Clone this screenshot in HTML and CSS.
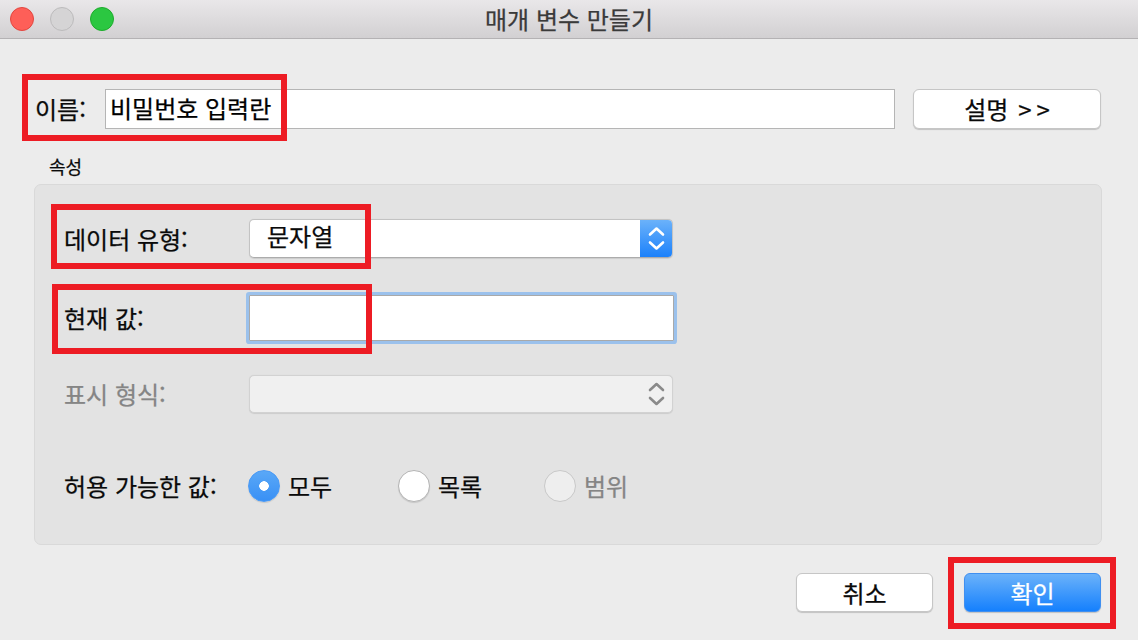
FILE: index.html
```html
<!DOCTYPE html>
<html lang="ko">
<head>
<meta charset="utf-8">
<title>매개 변수 만들기</title>
<link rel="stylesheet" href="styles.css">
</head>
<body>
<div class="screen">
  <header class="titlebar">
    <div class="lights">
      <span class="light light-red"></span>
      <span class="light light-gray"></span>
      <span class="light light-green"></span>
    </div>
    <div class="title">매개 변수 만들기</div>
    <div></div>
  </header>

  <div class="name-row">
    <label class="name-label">이름:</label>
    <div class="name-input">비밀번호 입력란</div>
    <button class="btn btn-desc">설명 <span class="arrows">&gt;&gt;</span></button>
  </div>

  <div class="section-title">속성</div>

  <section class="panel">
    <div class="row row-type">
      <div class="label">데이터 유형:</div>
      <div class="select">
        <span class="select-text">문자열</span>
        <span class="stepper">
          <svg width="33" height="39" viewBox="0 0 33 39"><path d="M10 15.5 L16.5 9.5 L23 15.5 M10 23.5 L16.5 29.5 L23 23.5" fill="none" stroke="#fff" stroke-width="2.6" stroke-linecap="round" stroke-linejoin="round"/></svg>
        </span>
      </div>
    </div>
    <div class="row row-value">
      <div class="label">현재 값:</div>
      <div class="text-input"></div>
    </div>
    <div class="row row-format">
      <div class="label label-disabled">표시 형식:</div>
      <div class="select select-disabled">
        <span class="stepper-disabled">
          <svg width="33" height="38" viewBox="0 0 33 38"><path d="M10 15 L16.5 9 L23 15 M10 23 L16.5 29 L23 23" fill="none" stroke="#8a8a8a" stroke-width="2.6" stroke-linecap="round" stroke-linejoin="round"/></svg>
        </span>
      </div>
    </div>
    <div class="row row-allowed">
      <div class="label">허용 가능한 값:</div>
      <div class="radios">
        <div class="radio-opt"><span class="radio radio-on"></span><span>모두</span></div>
        <div class="radio-opt"><span class="radio"></span><span>목록</span></div>
        <div class="radio-opt radio-opt-disabled"><span class="radio radio-disabled"></span><span>범위</span></div>
      </div>
    </div>
  </section>

  <div class="footer">
    <button class="btn btn-cancel">취소</button>
    <button class="btn btn-ok">확인</button>
  </div>

  <div class="mark mark-name"></div>
  <div class="mark mark-type"></div>
  <div class="mark mark-value"></div>
  <div class="mark mark-ok"></div>
</div>
</body>
</html>
```

FILE: styles.css
```css
html, body {
  margin: 0;
  padding: 0;
}
body {
  background: #ececec;
  font-family: "Noto Sans CJK KR", "Noto Sans", sans-serif;
  color: #0a0a0a;
  width: 1138px;
  height: 640px;
  overflow: hidden;
  -webkit-text-stroke: 0.25px currentColor;
}
.screen {
  position: relative;
  width: 1138px;
  height: 640px;
  display: flex;
  flex-direction: column;
}

/* title bar */
.titlebar {
  height: 38px;
  border-bottom: 1px solid #b4b2b4;
  background: linear-gradient(#e9e7e9, #d2d0d2);
  display: grid;
  grid-template-columns: 1fr auto 1fr;
  align-items: center;
  flex: none;
}
.lights {
  display: flex;
  gap: 16px;
  padding-left: 10px;
}
.light {
  width: 24px;
  height: 24px;
  border-radius: 50%;
  box-sizing: border-box;
}
.light-red { background: #fe5f58; border: 1px solid #e2463f; }
.light-gray { background: #d5d4d5; border: 1px solid #bcbbbc; }
.light-green { background: #2bc741; border: 1px solid #1dac2c; }
.title {
  font-size: 24px;
  line-height: 30px;
  color: #3a3a3a;
}

/* name row */
.name-row {
  display: flex;
  align-items: center;
  height: 40px;
  margin-top: 50px;
  padding-left: 35px;
  flex: none;
}
.name-label {
  width: 70px;
  font-size: 24px;
  line-height: 30px;
}
.name-input {
  width: 790px;
  height: 40px;
  box-sizing: border-box;
  background: #fff;
  border: 1px solid #b5b5b5;
  font-size: 24px;
  line-height: 36px;
  padding-left: 4px;
  color: #000;
}
.btn {
  font-family: inherit;
  font-size: 24px;
  color: #0a0a0a;
  background: #fff;
  border: 1px solid #c6c6c6;
  border-radius: 6px;
  box-shadow: 0 1px 1px rgba(0,0,0,0.18);
  padding: 0;
  box-sizing: border-box;
  line-height: 1;
}
.btn-desc {
  margin-left: 18px;
  width: 188px;
  height: 40px;
}
.arrows {
  letter-spacing: 5px;
  margin-left: 3px;
  margin-right: -5px;
}

/* section */
.section-title {
  margin: 26px 0 0 49px;
  font-size: 18px;
  line-height: 22px;
  height: 22px;
  flex: none;
}
.panel {
  margin: 7px 0 0 34px;
  width: 1068px;
  height: 361px;
  box-sizing: border-box;
  background: #e3e3e3;
  border: 1px solid #d9d9d9;
  border-radius: 7px;
  padding-left: 29px;
  display: flex;
  flex-direction: column;
  flex: none;
}
.row {
  display: flex;
  align-items: center;
}
.row-type { margin-top: 34px; height: 39px; }
.row-value { margin-top: 37px; height: 46px; }
.row-format { margin-top: 34px; height: 38px; }
.row-allowed { margin-top: 57px; height: 32px; }
.label {
  width: 185px;
  flex: none;
  font-size: 24px;
  line-height: 30px;
}
.label-disabled { color: #858585; }

.select {
  position: relative;
  width: 424px;
  height: 39px;
  box-sizing: border-box;
  background: #fff;
  border: 1px solid #c3c3c3;
  border-bottom-color: #acacac;
  border-radius: 5px;
  display: flex;
  align-items: center;
  overflow: hidden;
  box-shadow: 0 0.5px 1px rgba(0,0,0,0.1);
}
.select-text {
  flex: 1;
  padding-left: 17px;
  font-size: 24px;
  line-height: 30px;
  margin-top: -6px;
}
.stepper {
  width: 33px;
  height: 39px;
  margin: -1px -1px -1px 0;
  background: linear-gradient(#6db3fa, #1a80fb);
  display: flex;
}
.select-disabled {
  height: 38px;
  background: #f0f0f0;
  border-color: #d2d2d2;
  justify-content: flex-end;
}
.stepper-disabled {
  width: 33px;
  height: 38px;
  display: flex;
  margin-right: -1px;
}

.text-input {
  width: 425px;
  height: 46px;
  box-sizing: border-box;
  background: #fff;
  border: 1px solid #a9a9a9;
  box-shadow: 0 0 0 3px #9bc1ec;
  border-radius: 1px;
}

/* radios */
.radios {
  display: grid;
  grid-template-columns: 150px 146px auto;
  align-items: center;
  font-size: 24px;
  line-height: 30px;
  margin-left: -1px;
}
.radio-opt {
  display: flex;
  align-items: center;
  gap: 8px;
}
.radio {
  width: 32px;
  height: 32px;
  border-radius: 50%;
  box-sizing: border-box;
  background: #fff;
  border: 1px solid #b4b4b4;
  box-shadow: 0 1px 1px rgba(0,0,0,0.12);
  flex: none;
}
.radio-on {
  background: radial-gradient(circle, #fff 0 4.5px, transparent 5px), linear-gradient(#5aa8f7, #3990f5);
  border-color: #4a9af5;
}
.radio-disabled {
  background: #eeeeee;
  border-color: #c8c8c8;
  box-shadow: none;
}
.radio-opt-disabled { color: #858585; }

/* footer */
.footer {
  display: flex;
  justify-content: flex-end;
  gap: 31px;
  margin-top: 28px;
  padding-right: 37px;
  flex: none;
}
.btn-cancel, .btn-ok {
  width: 137px;
  height: 39px;
}
.btn-ok {
  background: linear-gradient(#6bb2fa, #1580fd);
  border-color: #3f8ff0;
  color: #fff;
}

/* annotation boxes */
.mark {
  position: absolute;
  border: 6px solid #ed1c24;
  box-sizing: border-box;
}
.mark-name { left: 22px; top: 74px; width: 265px; height: 67px; }
.mark-type { left: 51px; top: 204px; width: 320px; height: 65px; }
.mark-value { left: 52px; top: 284px; width: 320px; height: 70px; }
.mark-ok { left: 948px; top: 557px; width: 168px; height: 72px; }
```
